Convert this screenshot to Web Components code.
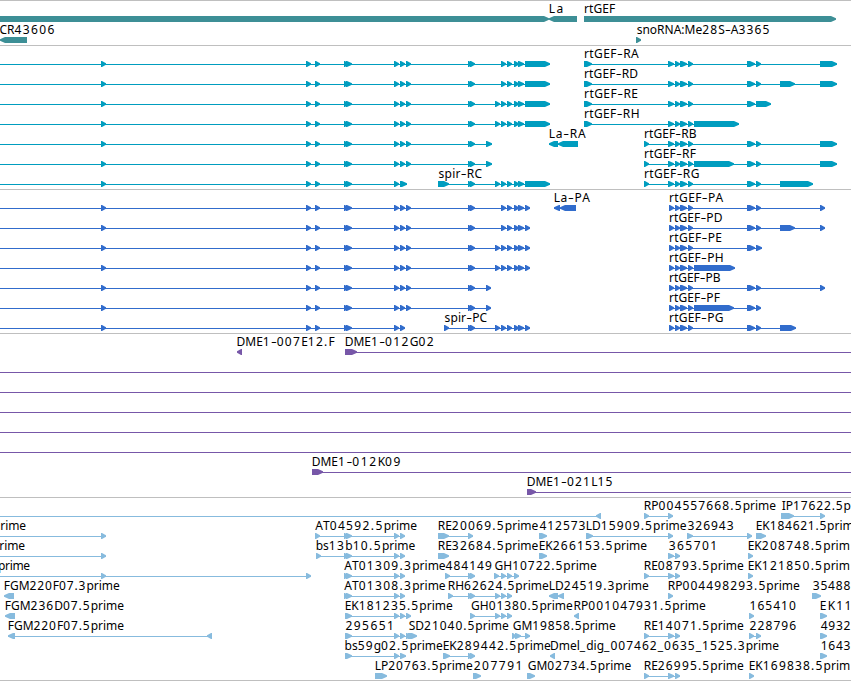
<!DOCTYPE html>
<html lang="en">
<head>
<meta charset="utf-8">
<title>Genome browser</title>
<style>
html,body{margin:0;background:#fff;overflow:hidden}
</style>
</head>
<body>
<genome-browser></genome-browser>
<script>
const FONT = '12px "Noto Sans","Open Sans",sans-serif';
const pen = document.createElement('canvas').getContext('2d');
pen.font = FONT;
const SVG = 'http://www.w3.org/2000/svg';

// Exons shared by the transcripts of a gene: start-end
const SP = '0 101-106 306-311 315-320 344-348 346-352 394-399 400-405';
const SPL = SP + ' 406-411 468-472 470-475';
const T4 = '501-506 507-512 514-519 518-524';
const T5 = '495-500 ' + T4;
const R4 = '668-674 675-680 680-687 688-693';
const P4 = '669-674 675-680 680-687 688-693';
const U2 = '747-755 756-761';
const A4 = '344-348 346-352 394-399 400-405';
const RE3 = '644-649 668-674 675-680';

// Feature: [label, label start, label end, strand, blocks]; a bare number among
// the blocks only extends the connecting line.
const TRACKS = [
  {color:'#3d8f96', height:45, pitch:21, rows:[
    [['',0,0,'+','-9-549'],['La',549.7,562.5,'-','549-577'],['rtGEF',585,615,'+','584-836']],
    [['CR43606',-0.5,54.5,'-','0-27'],['snoRNA:Me28S-A3365',636.7,769.5,'+','636-641']]]},
  {color:'#009dbf', height:144, rows:[
    [['',0,0,'+',`${SPL} ${T4} 525-550`],['rtGEF-RA',585,639,'+',`584-592 ${R4} ${U2} 820-837`]],
    [['',0,0,'+',`${SPL} ${T4} 525-550`],['rtGEF-RD',585,638.3,'+',`584-592 ${R4} ${U2} 780-795 820-837`]],
    [['',0,0,'+',`${SPL} ${T5} 525-550`],['rtGEF-RE',585,637.3,'+',`584-592 ${R4} 747-755 756-771`]],
    [['',0,0,'+',`${SPL} ${T5} 525-550`],['rtGEF-RH',585,638.6,'+',`584-592 ${R4} 694-739`]],
    [['',0,0,'+',`${SPL} 486-492`],['La-RA',549.7,586,'-','549-558 558-578'],['rtGEF-RB',645,696.7,'+',`644-649 ${R4} ${U2} 820-837`]],
    [['',0,0,'+',`${SPL} 486-492`],['rtGEF-RF',645,695.7,'+',`644-649 ${R4} 694-734 ${U2} 820-837`]],
    [['',0,0,'+',SP.replace('405','407')],['spir-RC',438.5,482.5,'+',`438-449 468-472 470-475 ${T5} 525-550`],['rtGEF-RG',645,698.6,'+',`644-649 ${R4} ${U2} 780-813`]]]},
  {color:'#316ccc', height:144, rows:[
    [['',0,0,'+',`${SPL} ${T4} 525-530`],['La-PA',554.7,589.7,'-','554-560 560-576'],['rtGEF-PA',670,723,'+',`${P4} ${U2} 820-825`]],
    [['',0,0,'+',`${SPL} ${T4} 525-530`],['rtGEF-PD',670,722.6,'+',`${P4} ${U2} 780-795 820-825`]],
    [['',0,0,'+',`${SPL} ${T5} 525-530`],['rtGEF-PE',670,721.3,'+',`${P4} 747-755 756-762`]],
    [['',0,0,'+',`${SPL} ${T5} 525-530`],['rtGEF-PH',670,722.6,'+',`${P4} 694-735`]],
    [['',0,0,'+',`${SPL} 486-491`],['rtGEF-PB',670,720.7,'+',`${P4} ${U2} 820-825`]],
    [['',0,0,'+',`${SPL} 486-491`],['rtGEF-PF',670,719.7,'+',`${P4} 694-734 ${U2}`]],
    [['',0,0,'+',SP],['spir-PC',444.5,487.5,'+',`444-449 468-472 470-475 ${T5} 525-530`],['rtGEF-PG',670,722.6,'+',`${P4} ${U2} 780-796`]]]},
  {color:'#7757a8', height:164, rows:[
    [['DME1-007E12.F',237.5,334.5,'-','237-242'],['DME1-012G02',345.7,433.7,'+','345-357 851']],
    [['',0,0,'+','0 851']],[['',0,0,'+','0 851']],[['',0,0,'+','0 851']],[['',0,0,'+','0 851']],[['',0,0,'+','0 851']],
    [['DME1-012K09',312.7,400.5,'+','312-323 851']],
    [['DME1-021L15',527.7,612.5,'+','527-536 851']]]},
  {color:'#87bbde', height:183, rows:[
    [['',0,0,'-','0 596-601'],['RP004557668.5prime',644.7,776.3,'+','644-649 668-673'],['IP17622.5p',781.7,850.5,'+','781-794 820-825']],
    [['rime',1.3,26.3,'+','0 101-106'],['AT04592.5prime',315.3,416.5,'+','315-320 '+A4],['RE20069.5prime',438.7,538.5,'+','438-449 468-473'],
     ['412573',539.5,585.5,'+','539-547'],['LD15909.5prime',586.7,686.7,'+','586-593 668-673'],['326943',687.5,733.7,'+','687-693 747-752'],['EK184621.5prim',756.7,853.5,'+','756-766']],
    [['rime',0.3,25.3,'+','0 101-106'],['bs13b10.5prime',316.7,415.5,'+','316-321 '+A4],['RE32684.5prime',438.7,538.5,'+','438-449'],
     ['EK266153.5prime',539.7,647.3,'+','539-547'],['365701',668.7,715.3,'+','668-674 675-680'],['EK208748.5prim',748.7,849.7,'+','748-753']],
    [['prime',-1,30.3,'+','0 101-106 306-311'],['AT01309.3prime',344.3,445,'+',A4],['484149',445.5,492,'+','445-450 468-472 470-475'],
     ['GH10722.5prime',494.5,597,'+','494-499 501-506 507-512 514-519'],['RE08793.5prime',644.7,744,'+',RE3],['EK121850.5prim',748.7,849.7,'+','748-753']],
    [['FGM220F07.3prime',4.7,120,'-','4-14'],['AT01308.3prime',344.3,445,'+',A4],['RH62624.5prime',448.7,549,'+','448-453 468-472 470-475 495-500 501-506 507-512'],
     ['LD24519.3prime',549.7,649,'-','549-558 558-564'],['RP004498293.5prime',668.7,800,'+','668-673'],['35488',812.7,850.5,'+','812-821']],
    [['FGM236D07.5prime',5.7,124.3,'-','5-15'],['EK181235.5prime',345.7,453,'+','345-352 394-399 400-405 406-411'],['GH01380.5prime',471,573,'+','470-475 495-500 501-506 507-512'],
     ['RP001047931.5prime',574.5,706,'-','574-579'],['165410',750.5,796,'+','749-754'],['EK11',820.7,849.5,'+','820-827']],
    [['FGM220F07.5prime',8.7,124.3,'-','8-15 207-212'],['295651',345.5,392,'+','345-352 394-399 400-405 406-411'],['SD21040.5prime',408.7,509,'+','408-417'],
     ['GM19858.5prime',512.7,616,'+','512-516 515-521 525-530'],['RE14071.5prime',644.7,744,'+',RE3],['228796',749.5,796.3,'+','749-754 756-761'],['4932',820.7,850.5,'+','820-827']],
    [['bs59g02.5prime',345.5,443,'+','345-352 394-399 400-406'],['EK289442.5prime',443.7,551,'+','443-450 468-472 470-475'],
     ['Dmel_dig_007462_0635_1525.3prime',551,779.3,'-','550-555'],['1643',821.7,850.5,'+','820-827']],
    [['LP20763.5prime',375.7,473,'+','375-387'],['207791',473.7,520.5,'+','473-481'],['GM02734.5prime',527.7,631.5,'+','527-535'],
     ['RE26995.5prime',644.7,744,'+',RE3],['EK169838.5prim',749.7,850,'+','749-754']]]}
];

// One lane of features: labels above, strand-aware blocks below.
class FeatureRow extends HTMLElement {
  constructor() {
    super();
    this.attachShadow({mode:'open'}).innerHTML = `<style>
      :host{display:block;flex:none;height:var(--pitch,20px)}
      svg{display:block;width:100%;height:100%;overflow:visible}
      text{font:${FONT};fill:#000;white-space:pre;font-kerning:none}
      .dash{font-size:18px;font-weight:300}
      rect,path{fill:var(--track-color)}
    </style><svg></svg>`;
  }
  set features(list) {
    const svg = this.shadowRoot.querySelector('svg');
    const add = (tag, attrs, parent = svg) => {
      const el = document.createElementNS(SVG, tag);
      for (const k in attrs) el.setAttribute(k, attrs[k]);
      parent.append(el);
      return el;
    };
    for (const [label, from, to, strand, spec] of list) {
      const blocks = spec.split(' ').map(s => {
        const m = s.match(/^(-?\d+)-(\d+)$/);
        return m ? [+m[1], +m[2]] : [+s];
      });
      const x0 = blocks[0][0], x1 = blocks[blocks.length - 1].at(-1);
      if (blocks.length > 1) add('rect', {x:x0, y:18, width:x1 - x0, height:1, 'shape-rendering':'crispEdges'});
      for (const [a, b] of blocks) {
        if (b === undefined) continue;
        const head = Math.min(b - a - 1, 5);
        const d = strand === '+'
          ? `M${a} 15H${b - head}L${b} 17.3V18.7L${b - head} 21H${a}Z`
          : `M${b} 15H${a + head}L${a} 17.3V18.7L${a + head} 21H${b}Z`;
        add('path', {d});
      }
      if (label) this.label(add, label, from, to);
    }
  }
  // Fits a label's ink between two positions; in long codes the digits and
  // punctuation take up the extra width, so that letters keep their spacing.
  label(add, label, from, to) {
    const m = pen.measureText(label);
    const widened = label.includes('-') ? 0.322 * 6 : 0;
    const spare = to - from - m.actualBoundingBoxLeft - m.actualBoundingBoxRight - widened;
    const last = label.length - 1;
    let loose = [...label].map((c, i) => i < last && /[\d._]/.test(c));
    if (loose.filter(Boolean).length < 3 || spare < 0) loose = loose.map((_, i) => i < last);
    const gap = spare / loose.filter(Boolean).length;
    const text = add('text', {x:from + m.actualBoundingBoxLeft, y:12});
    for (let i = 0; i <= last;) {
      let j = i + 1;
      const dash = label[i] === '-';
      while (!dash && j <= last && loose[j] === loose[i] && label[j] !== '-') j++;
      const attrs = dash ? {class:'dash', dy:1} : label[i - 1] === '-' ? {dy:-1} : {};
      const run = add('tspan', attrs, text);
      run.style.letterSpacing = loose[i] ? gap.toFixed(3) + 'px' : '0';
      run.textContent = label.slice(i, j);
      i = j;
    }
  }
}
customElements.define('feature-row', FeatureRow);

class GenomeTrack extends HTMLElement {
  constructor() {
    super();
    this.attachShadow({mode:'open'}).innerHTML = `<style>
      :host{display:flex;flex-direction:column;box-sizing:border-box;border-top:1px solid #bfbfbf}
    </style><slot></slot>`;
  }
}
customElements.define('genome-track', GenomeTrack);

class GenomeBrowser extends HTMLElement {
  constructor() {
    super();
    const root = this.attachShadow({mode:'open'});
    root.innerHTML = `<style>
      :host{display:flex;flex-direction:column;width:851px;height:681px;box-sizing:border-box;overflow:hidden;background:#fff}
      footer{height:1px;background:#bfbfbf}
    </style>`;
    for (const track of TRACKS) {
      const el = document.createElement('genome-track');
      el.style.height = track.height + 'px';
      el.style.setProperty('--track-color', track.color);
      el.style.setProperty('--pitch', (track.pitch || 20) + 'px');
      for (const features of track.rows) {
        const row = document.createElement('feature-row');
        row.features = features;
        el.append(row);
      }
      root.append(el);
    }
    root.append(document.createElement('footer'));
  }
}
customElements.define('genome-browser', GenomeBrowser);
</script>
</body>
</html>
